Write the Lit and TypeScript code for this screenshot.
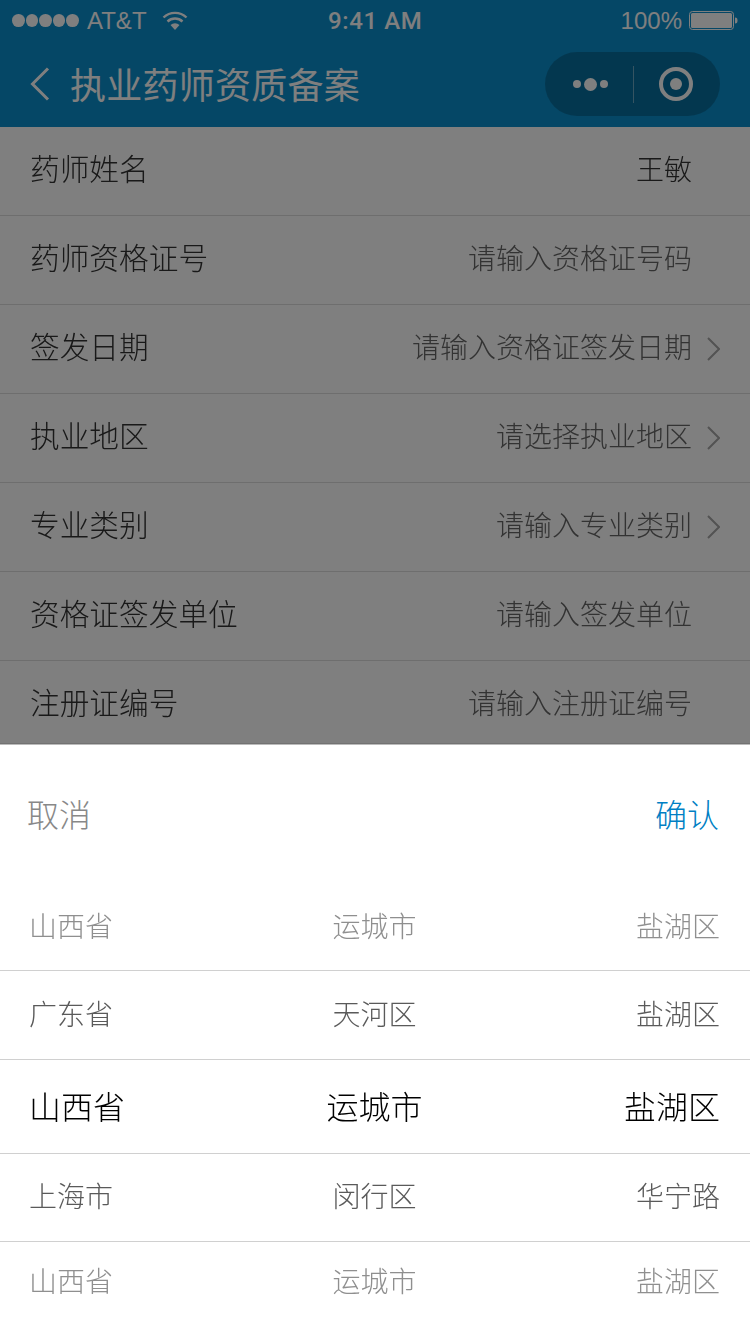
import { LitElement, html, css } from "lit";
import { customElement } from "lit/decorators.js";

const FIELDS = [
  { label: "药师姓名", value: "王敏", filled: true, arrow: false },
  { label: "药师资格证号", value: "请输入资格证号码", arrow: false },
  { label: "签发日期", value: "请输入资格证签发日期", arrow: true },
  { label: "执业地区", value: "请选择执业地区", arrow: true },
  { label: "专业类别", value: "请输入专业类别", arrow: true },
  { label: "资格证签发单位", value: "请输入签发单位", arrow: false },
  { label: "注册证编号", value: "请输入注册证编号", arrow: false },
];

const PICKER = [
  { cols: ["山西省", "运城市", "盐湖区"], kind: "far first" },
  { cols: ["广东省", "天河区", "盐湖区"], kind: "near" },
  { cols: ["山西省", "运城市", "盐湖区"], kind: "active" },
  { cols: ["上海市", "闵行区", "华宁路"], kind: "near short" },
  { cols: ["山西省", "运城市", "盐湖区"], kind: "far last" },
];

@customElement("app-root")
export class AppRoot extends LitElement {
  static styles = css`
    :host {
      display: block;
      position: relative;
      width: 750px;
      height: 1334px;
      overflow: hidden;
      background: #fff;
      font-family: "Liberation Sans", "Noto Sans CJK SC", sans-serif;
    }

    .top {
      height: 127px;
      background: #0a8ecc;
      color: #fff;
    }

    .status {
      height: 40px;
      display: flex;
      align-items: center;
      justify-content: space-between;
      padding: 1px 12px 0 12px;
      box-sizing: border-box;
      font-size: 24px;
      position: relative;
    }
    .status-left,
    .status-right {
      display: flex;
      align-items: center;
    }
    .signal {
      display: flex;
      gap: 0.75px;
      margin-right: 8px;
    }
    .signal i {
      width: 12.8px;
      height: 12.8px;
      border-radius: 50%;
      background: #fff;
    }
    .wifi {
      margin-left: 15px;
    }
    .time {
      position: absolute;
      left: 328px;
      font-family: Roboto, "Liberation Sans", sans-serif;
      font-weight: 500;
      letter-spacing: 0.6px;
    }
    .battery {
      margin-left: 7px;
    }

    .nav {
      height: 87px;
      display: flex;
      align-items: center;
      padding: 0 30px;
      box-sizing: border-box;
    }
    .back {
      margin-right: 20px;
    }
    .title {
      font-size: 36px;
      letter-spacing: 0.25px;
      flex: 1;
      white-space: nowrap;
      padding-bottom: 2px;
    }
    .capsule {
      width: 175px;
      height: 64px;
      border-radius: 32px;
      background: rgba(0, 0, 0, 0.22);
      display: flex;
      align-items: center;
      margin-top: 1px;
    }
    .more {
      width: 88px;
      display: flex;
      align-items: center;
      justify-content: center;
      gap: 3px;
      padding-left: 3px;
      box-sizing: border-box;
    }
    .more i {
      width: 8px;
      height: 8px;
      border-radius: 50%;
      background: #fff;
    }
    .more i.big {
      width: 13px;
      height: 13px;
    }
    .sep {
      width: 1px;
      height: 37px;
      background: rgba(255, 255, 255, 0.4);
    }
    .ring {
      flex: 1;
      display: flex;
      justify-content: center;
      padding-right: 2px;
    }

    .row {
      height: 89px;
      box-sizing: border-box;
      display: flex;
      align-items: center;
      padding: 0 0 0 30px;
      background: #fff;
      border-bottom: 1px solid #dcdcdc;
      filter: grayscale(1);
    }
    .label {
      font-size: 29.7px;
      font-weight: 300;
      color: #333;
      flex: 1;
      white-space: nowrap;
      padding-bottom: 7px;
    }
    .value {
      font-size: 28px;
      font-weight: 300;
      color: #666;
      margin-right: 58px;
      white-space: nowrap;
      padding-bottom: 7px;
    }
    .value.filled {
      color: #333;
    }
    .value.arrow {
      margin-right: 0;
    }
    .chev {
      margin: 0 30px 1px 15px;
    }

    .scrim {
      position: absolute;
      inset: 0;
      background: rgba(0, 0, 0, 0.5);
    }

    .sheet {
      position: absolute;
      left: 0;
      right: 0;
      top: 744px;
      bottom: 0;
      background: #fff;
      border-top: 1px solid #bbb;
      box-shadow: 0 -1px 0 rgba(0, 0, 0, 0.1);
    }
    .actions {
      height: 136px;
      display: flex;
      justify-content: space-between;
      align-items: center;
      padding: 0 31px 0 27px;
      box-sizing: border-box;
      font-size: 32px;
      font-weight: 300;
      color: #888;
    }
    .actions .ok {
      color: #007fc4;
    }

    .pick {
      display: grid;
      grid-template-columns: 1fr auto 1fr;
      align-items: center;
      padding: 0 30px 5px 29px;
      box-sizing: border-box;
      height: 89px;
      border-bottom: 1px solid #d0d0d0;
      font-size: 28px;
      font-weight: 300;
      white-space: nowrap;
      filter: grayscale(1);
    }
    .pick span:last-child {
      text-align: right;
    }
    .pick.far {
      color: #8f8f8f;
    }
    .pick.near {
      color: #5a5a5a;
    }
    .pick.active {
      height: 94px;
      font-size: 32px;
      color: #000;
      padding-bottom: 3px;
    }
    .pick.short {
      height: 88px;
    }
    .pick.first {
      height: 90px;
      padding-bottom: 2px;
    }
    .pick.last {
      border-bottom: none;
      height: 81px;
    }
  `;

  renderChevron() {
    return html`<svg class="chev" width="13" height="24" viewBox="0 0 13 24">
      <path d="M1 1l11 11L1 23" fill="none" stroke="#a6a6a6" stroke-width="2" />
    </svg>`;
  }

  render() {
    return html`
      <div class="top">
        <div class="status">
          <div class="status-left">
            <div class="signal"><i></i><i></i><i></i><i></i><i></i></div>
            <span>AT&amp;T</span>
            <svg class="wifi" width="26" height="20" viewBox="0 0 26 20">
              <path d="M1.5 6.500a16.500 16.500 0 0 1 23 0" fill="none" stroke="#fff" stroke-width="2.400" />
              <path d="M5.500 10.500a11 11 0 0 1 15 0" fill="none" stroke="#fff" stroke-width="2.400" />
              <path d="M8.500 14a6.600 6.600 0 0 1 9 0L13 19z" fill="#fff" />
            </svg>
          </div>
          <span class="time">9:41 AM</span>
          <div class="status-right">
            <span>100%</span>
            <svg class="battery" width="49" height="20" viewBox="0 0 49 20">
              <rect x="0.500" y="0.500" width="44" height="18" rx="3" fill="none" stroke="#fff" />
              <rect x="2" y="2" width="41" height="15" rx="1.500" fill="#fff" />
              <path d="M46 6.500c2 0 2.500 1 2.500 3s-.5 3-2.500 3z" fill="#fff" />
            </svg>
          </div>
        </div>
        <div class="nav">
          <svg class="back" width="20" height="34" viewBox="0 0 20 34">
            <path d="M18 1.500L2.500 17 18 32.500" fill="none" stroke="#fff" stroke-width="3" />
          </svg>
          <div class="title">执业药师资质备案</div>
          <div class="capsule">
            <div class="more"><i></i><i class="big"></i><i></i></div>
            <div class="sep"></div>
            <div class="ring">
              <svg width="36" height="36" viewBox="0 0 36 36">
                <circle cx="18" cy="18" r="15" fill="none" stroke="#fff" stroke-width="4" />
                <circle cx="18" cy="18" r="6" fill="#fff" />
              </svg>
            </div>
          </div>
        </div>
      </div>

      ${FIELDS.map(
        (f) => html`
          <div class="row">
            <div class="label">${f.label}</div>
            <div class="value ${f.filled ? "filled" : ""} ${f.arrow ? "arrow" : ""}">${f.value}</div>
            ${f.arrow ? this.renderChevron() : ""}
          </div>
        `
      )}

      <div class="scrim"></div>

      <div class="sheet">
        <div class="actions">
          <span>取消</span>
          <span class="ok">确认</span>
        </div>
        ${PICKER.map(
          (p) => html`
            <div class="pick ${p.kind}">
              ${p.cols.map((c) => html`<span>${c}</span>`)}
            </div>
          `
        )}
      </div>
    `;
  }
}
